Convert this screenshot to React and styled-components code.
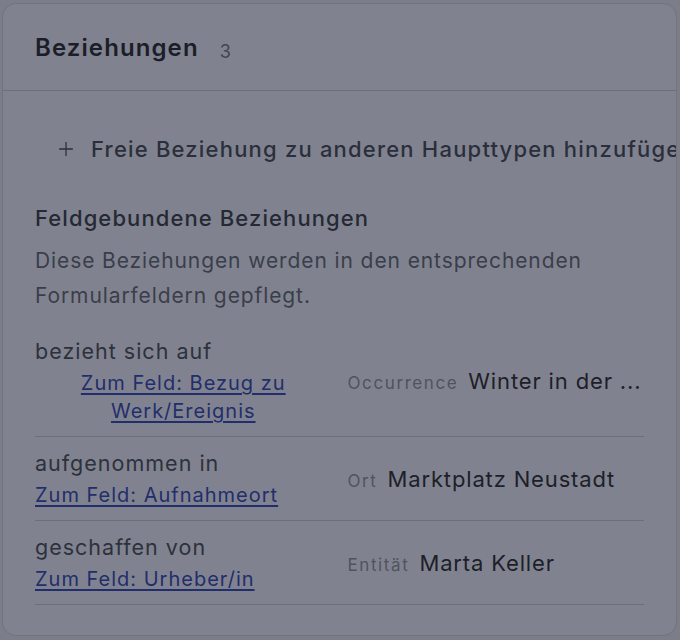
import styled, { createGlobalStyle } from 'styled-components'
import { Plus } from 'lucide-react'

const GlobalStyle = createGlobalStyle`
  html, body {
    margin: 0;
    padding: 0;
    background: #7b7e89;
  }
  body {
    font-family: Inter, "Noto Sans", sans-serif;
  }
`

const relations = [
  {
    id: 1,
    type: 'bezieht sich auf',
    field: 'Zum Feld: Bezug zu Werk/Ereignis',
    kind: 'Occurrence',
    value: 'Winter in der ...',
  },
  {
    id: 2,
    type: 'aufgenommen in',
    field: 'Zum Feld: Aufnahmeort',
    kind: 'Ort',
    value: 'Marktplatz Neustadt',
  },
  {
    id: 3,
    type: 'geschaffen von',
    field: 'Zum Feld: Urheber/in',
    kind: 'Entität',
    value: 'Marta Keller',
  },
]

const App = () => {
  return (
    <>
      <GlobalStyle />
      <Card>
        <Header>
          <Title>Beziehungen</Title>
          <Count>3</Count>
        </Header>
        <Body>
          <AddButton type="button">
            <Plus size={22} strokeWidth={1.4} />
            Freie Beziehung zu anderen Haupttypen hinzufügen
          </AddButton>
          <SectionTitle>Feldgebundene Beziehungen</SectionTitle>
          <Description>
            Diese Beziehungen werden in den entsprechenden Formularfeldern gepflegt.
          </Description>
          <List>
            {relations.map((rel) => (
              <Row key={rel.id}>
                <Left>
                  <RelType>{rel.type}</RelType>
                  <FieldLink type="button">{rel.field}</FieldLink>
                </Left>
                <Right>
                  <Kind>{rel.kind}</Kind>
                  <Value>{rel.value}</Value>
                </Right>
              </Row>
            ))}
          </List>
        </Body>
      </Card>
    </>
  )
}

const Card = styled.section`
  box-sizing: border-box;
  margin: 3px 3px 0 2px;
  height: 633px;
  background: #80838f;
  border: 1px solid #71747f;
  border-radius: 14px;
  overflow: hidden;
  display: flex;
  flex-direction: column;
`

const Header = styled.header`
  height: 86px;
  padding: 0 32px;
  display: flex;
  align-items: center;
  gap: 21px;
  border-bottom: 1px solid #6c6f7a;
`

const Title = styled.h2`
  margin: 0;
  font-size: 24px;
  font-weight: 600;
  letter-spacing: 1.1px;
  color: #1b1e28;
`

const Count = styled.span`
  font-size: 18px;
  letter-spacing: 0.5px;
  color: #41454f;
  padding-top: 8px;
`

const Body = styled.div`
  padding: 30px 32px 0;
  display: flex;
  flex-direction: column;
`

const AddButton = styled.button`
  align-self: flex-start;
  display: flex;
  align-items: center;
  gap: 14px;
  height: 56px;
  padding: 0 20px;
  background: none;
  border: none;
  white-space: nowrap;
  font-family: inherit;
  font-size: 22px;
  font-weight: 500;
  letter-spacing: 1.2px;
  color: #2b2f3b;
  cursor: pointer;
`

const SectionTitle = styled.h3`
  margin: 26px 0 0;
  font-size: 22px;
  line-height: 30px;
  font-weight: 500;
  letter-spacing: 1.1px;
  color: #252934;
`

const Description = styled.p`
  margin: 10px 0 0;
  font-size: 21px;
  line-height: 35px;
  letter-spacing: 0.9px;
  color: #3a3e4a;
`

const List = styled.div`
  margin-top: 12px;
  display: flex;
  flex-direction: column;
`

const Row = styled.div`
  display: grid;
  grid-template-columns: 1fr 1fr;
  column-gap: 16px;
  align-items: center;
  padding: 11px 0 11px;
  border-bottom: 1px solid #6c6f7a;
`

const Left = styled.div`
  display: flex;
  flex-direction: column;
  align-items: flex-start;
  gap: 3px;
  min-width: 0;
`

const RelType = styled.div`
  font-size: 21.5px;
  line-height: 30px;
  letter-spacing: 1px;
  color: #2d313c;
`

const FieldLink = styled.button`
  padding: 0;
  background: none;
  border: none;
  font-family: inherit;
  font-size: 20px;
  line-height: 28px;
  letter-spacing: 1px;
  color: #222e6c;
  text-decoration: underline;
  text-underline-offset: 3px;
  cursor: pointer;
`

const Right = styled.div`
  display: flex;
  align-items: baseline;
  gap: 10px;
  min-width: 0;
`

const Kind = styled.span`
  flex-shrink: 0;
  font-size: 17px;
  letter-spacing: 1.6px;
  color: #4f535e;
`

const Value = styled.span`
  min-width: 0;
  overflow: hidden;
  white-space: nowrap;
  text-overflow: ellipsis;
  font-size: 22px;
  letter-spacing: 0.85px;
  color: #1d2029;
`

export default App
